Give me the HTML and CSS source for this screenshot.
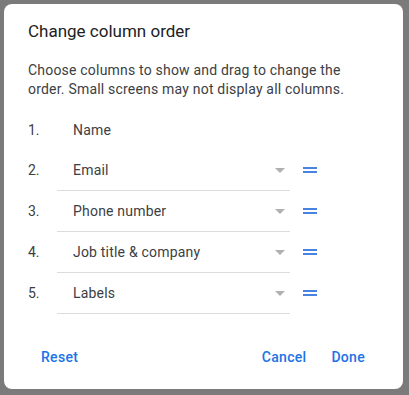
FILE: index.html
```html
<!DOCTYPE html>
<html>
<head>
<meta charset="utf-8">
<link rel="stylesheet" href="styles.css">
</head>
<body>
<div class="card">
  <h1 class="title">Change column order</h1>
  <p class="desc">Choose columns to show and drag to change the order. Small screens may not display all columns.</p>
  <div class="list">
    <div class="row">
      <span class="num">1.</span>
      <div class="field plain"><span class="label">Name</span></div>
    </div>
    <div class="row">
      <span class="num">2.</span>
      <div class="field"><span class="label">Email</span><span class="arrow"></span></div>
      <span class="handle"></span>
    </div>
    <div class="row">
      <span class="num">3.</span>
      <div class="field"><span class="label">Phone number</span><span class="arrow"></span></div>
      <span class="handle"></span>
    </div>
    <div class="row">
      <span class="num">4.</span>
      <div class="field"><span class="label">Job title &amp; company</span><span class="arrow"></span></div>
      <span class="handle"></span>
    </div>
    <div class="row">
      <span class="num">5.</span>
      <div class="field"><span class="label">Labels</span><span class="arrow"></span></div>
      <span class="handle"></span>
    </div>
  </div>
  <div class="footer">
    <span class="btn">Reset</span>
    <span class="spacer"></span>
    <span class="btn">Cancel</span>
    <span class="btn done">Done</span>
  </div>
</div>
</body>
</html>
```

FILE: styles.css
```css
html, body {
  margin: 0;
  padding: 0;
}
body {
  background: #7b7b7b;
  width: 409px;
  height: 395px;
  overflow: hidden;
  font-family: Roboto, "Liberation Sans", sans-serif;
}
.card {
  margin: 4px 0 0 4px;
  width: 399px;
  height: 385px;
  background: #ffffff;
  border-radius: 8px;
  box-sizing: border-box;
  padding: 15px 24px 0 24px;
}
.title {
  margin: 0;
  font-size: 17px;
  font-weight: 400;
  line-height: 24px;
  color: #202124;
}
.desc {
  margin: 18px 0 0 0;
  max-width: 330px;
  font-size: 14px;
  line-height: 19px;
  letter-spacing: 0.2px;
  color: #3c4043;
}
.list {
  margin-top: 11px;
  display: flex;
  flex-direction: column;
}
.row {
  display: flex;
  align-items: stretch;
  height: 41px;
}
.row:first-child {
  height: 40px;
}
.num {
  width: 29px;
  display: flex;
  align-items: center;
  font-size: 14px;
  color: #3c4043;
  padding-bottom: 1px;
}
.row:first-child .num { padding-bottom: 0; }
.field {
  width: 233px;
  display: flex;
  align-items: center;
  padding-left: 16px;
  box-sizing: border-box;
  border-bottom: 1px solid #dadce0;
}
.field.plain {
  border-bottom: none;
}
.label {
  flex: 1;
  font-size: 14px;
  letter-spacing: 0.2px;
  color: #3c4043;
}
.arrow {
  width: 0;
  height: 0;
  border-left: 5px solid transparent;
  border-right: 5px solid transparent;
  border-top: 5px solid #b0b0b0;
  margin-right: 5px;
}
.handle {
  width: 14px;
  margin-left: 13px;
  align-self: center;
  height: 6px;
  margin-bottom: 1px;
  border-top: 2px solid #4a82e2;
  border-bottom: 2px solid #4a82e2;
  box-sizing: border-box;
}
.footer {
  display: flex;
  align-items: center;
  margin-top: 33px;
  padding: 0 14px 0 13px;
}
.spacer { flex: 1; }
.btn {
  font-size: 14px;
  font-weight: 500;
  letter-spacing: 0.3px;
  color: #1a73e8;
  line-height: 20px;
}
.done {
  margin-left: 25px;
}
```
